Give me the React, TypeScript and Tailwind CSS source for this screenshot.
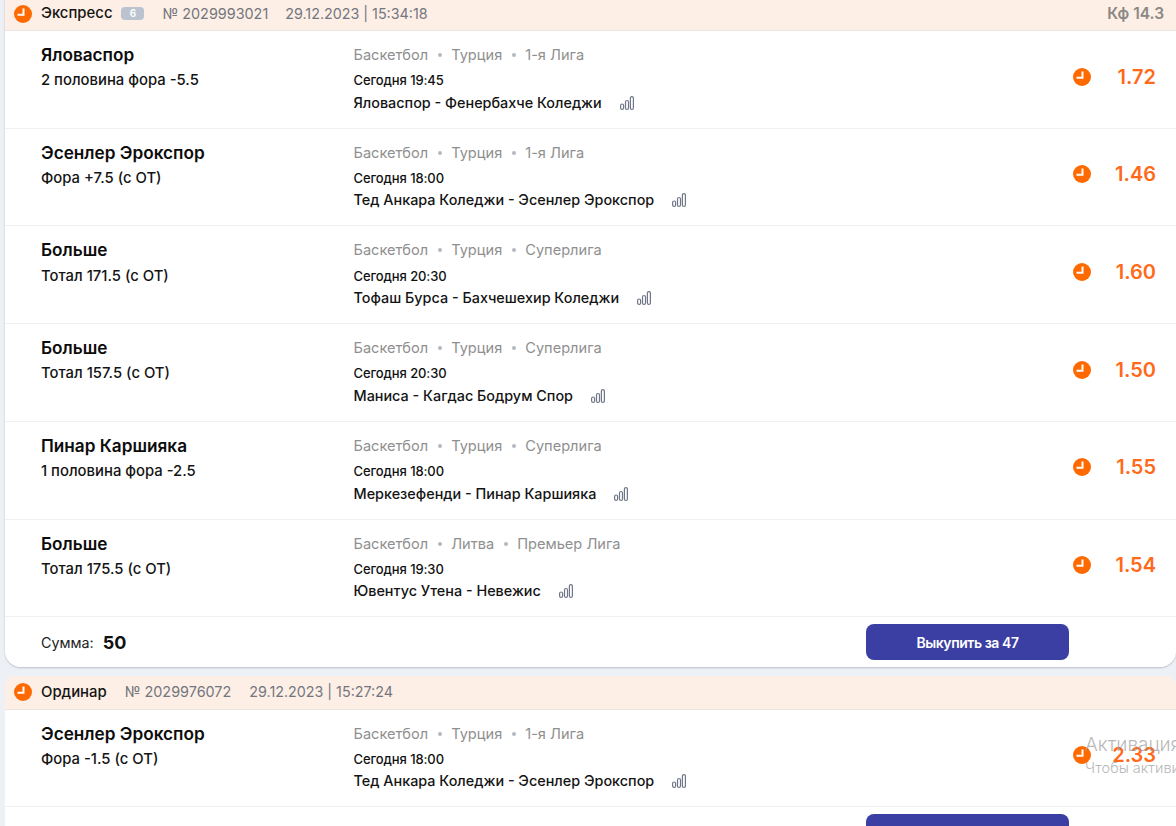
const font = { fontFamily: 'Inter, "Noto Sans", sans-serif' }

const ClockIcon = ({ size = 18 }: { size?: number }) => (
  <svg width={size} height={size} viewBox="0 0 18 18" className="shrink-0">
    <circle cx="9" cy="9" r="9" fill="#ff6a00" />
    <path d="M9.5 3.5v6.2H3.5" fill="none" stroke="#fff" strokeWidth="2" />
  </svg>
)

const StatsIcon = () => (
  <svg width="14" height="14" viewBox="0 0 14 14" className="shrink-0" fill="none" stroke="#6f7688" strokeWidth="1.2">
    <rect x="0.6" y="8" width="3" height="5.4" rx="1.5" />
    <rect x="5.5" y="4.5" width="3" height="8.9" rx="1.5" />
    <rect x="10.4" y="0.6" width="3" height="12.8" rx="1.5" />
  </svg>
)

type Bet = {
  name: string
  market: string
  league: [string, string, string]
  time: string
  match: string
  odd: string
}

const BetRow = ({ bet }: { bet: Bet }) => (
  <div className="flex h-[97.72px] shrink-0 border-b border-[#eef0f4] bg-white">
    <div className="w-[348.5px] shrink-0 pl-[36px] pt-[12px]">
      <div className="text-[17.2px] leading-[24px] font-semibold text-[#0c0c0c]">{bet.name}</div>
      <div className="mt-[1.2px] text-[14.85px] leading-[24px] font-medium text-[#141414]">{bet.market}</div>
    </div>
    <div className="flex-1 pt-[13px]">
      <div className="flex items-center text-[14.6px] leading-[22px] text-[#8f8f8f]">
        <span>{bet.league[0]}</span>
        <span className="mx-[9.5px] h-[4px] w-[4px] rounded-full bg-[#b4b8c0]"></span>
        <span>{bet.league[1]}</span>
        <span className="mx-[9.5px] h-[4px] w-[4px] rounded-full bg-[#b4b8c0]"></span>
        <span>{bet.league[2]}</span>
      </div>
      <div className="mt-[4.2px] text-[13px] leading-[20px] font-medium tracking-[-0.1px] text-[#111]">{bet.time}</div>
      <div className="mt-[0.5px] flex items-center gap-[18px] text-[14.4px] leading-[24px] font-medium text-[#141414]">
        <span>{bet.match}</span>
        <StatsIcon />
      </div>
    </div>
    <div className="flex w-[103px] shrink-0 items-center justify-between pb-[5.8px] pr-[20px]">
      <ClockIcon />
      <span className="text-[20px] font-semibold text-[#ff6a1a]">{bet.odd}</span>
    </div>
  </div>
)

const Footer = ({ amount }: { amount: boolean }) => (
  <div className="flex h-[50px] items-start justify-between bg-white pl-[36px] pr-[107px] pt-[7px]">
    {amount ? (
      <div className="flex h-[36px] items-center">
        <span className="mt-[1px] text-[14.3px] text-[#222]">Сумма:</span>
        <span className="ml-[9px] text-[18px] font-bold text-[#111]">50</span>
      </div>
    ) : (
      <div></div>
    )}
    <button className="h-[36px] w-[203px] rounded-[8px] bg-[#3b3fa3] text-[14px] font-semibold tracking-[-0.45px] text-white">
      Выкупить за 47
    </button>
  </div>
)

const express: Bet[] = [
  { name: 'Яловаспор', market: '2 половина фора -5.5', league: ['Баскетбол', 'Турция', '1-я Лига'], time: 'Сегодня 19:45', match: 'Яловаспор - Фенербахче Коледжи', odd: '1.72' },
  { name: 'Эсенлер Эрокспор', market: 'Фора +7.5 (с ОТ)', league: ['Баскетбол', 'Турция', '1-я Лига'], time: 'Сегодня 18:00', match: 'Тед Анкара Коледжи - Эсенлер Эрокспор', odd: '1.46' },
  { name: 'Больше', market: 'Тотал 171.5 (с ОТ)', league: ['Баскетбол', 'Турция', 'Суперлига'], time: 'Сегодня 20:30', match: 'Тофаш Бурса - Бахчешехир Коледжи', odd: '1.60' },
  { name: 'Больше', market: 'Тотал 157.5 (с ОТ)', league: ['Баскетбол', 'Турция', 'Суперлига'], time: 'Сегодня 20:30', match: 'Маниса - Кагдас Бодрум Спор', odd: '1.50' },
  { name: 'Пинар Каршияка', market: '1 половина фора -2.5', league: ['Баскетбол', 'Турция', 'Суперлига'], time: 'Сегодня 18:00', match: 'Меркезефенди - Пинар Каршияка', odd: '1.55' },
  { name: 'Больше', market: 'Тотал 175.5 (с ОТ)', league: ['Баскетбол', 'Литва', 'Премьер Лига'], time: 'Сегодня 19:30', match: 'Ювентус Утена - Невежис', odd: '1.54' },
]

const single: Bet = { name: 'Эсенлер Эрокспор', market: 'Фора -1.5 (с ОТ)', league: ['Баскетбол', 'Турция', '1-я Лига'], time: 'Сегодня 18:00', match: 'Тед Анкара Коледжи - Эсенлер Эрокспор', odd: '2.33' }

const App = () => {
  return (
    <div className="h-[826px] w-full overflow-hidden bg-[#edf0f5] pl-[5px]" style={font}>
      <div className="-mt-[3px] overflow-hidden rounded-b-[16px] shadow-[0_1px_2px_rgba(120,130,150,0.45)]">
        <div className="flex h-[34.05px] items-center border-b border-[#ece4de] bg-[#fdefe5] pl-[9px] pr-[12px]">
          <ClockIcon />
          <span className="ml-[9px] text-[14.9px] font-medium text-[#141414]">Экспресс</span>
          <span className="ml-[9px] flex h-[13px] w-[23px] items-center justify-center rounded-[4px] bg-[#bcc3d0] text-[10px] font-semibold text-white">6</span>
          <span className="ml-[18px] text-[14.4px] text-[#73767f]">№ 2029993021</span>
          <span className="ml-[17px] text-[14.3px] text-[#73767f]">29.12.2023 | 15:34:18</span>
          <span className="ml-auto text-[15.5px] font-semibold text-[#8a8785]">Кф 14.3</span>
        </div>
        {express.map((bet, i) => (
          <BetRow key={i} bet={bet} />
        ))}
        <Footer amount />
      </div>
      <div className="relative mt-[8.2px] overflow-hidden rounded-t-[10px]">
        <div className="flex h-[34.05px] items-center border-b border-[#ece4de] bg-[#fdefe5] pl-[9px] pr-[20px]">
          <ClockIcon />
          <span className="ml-[9px] text-[14.9px] font-medium text-[#141414]">Ординар</span>
          <span className="ml-[18px] text-[14.4px] text-[#73767f]">№ 2029976072</span>
          <span className="ml-[18px] text-[14.3px] text-[#73767f]">29.12.2023 | 15:27:24</span>
        </div>
        <BetRow bet={single} />
        <Footer amount={false} />
        <div className="absolute left-[1080px] top-[57px] w-[200px] whitespace-nowrap font-light text-[#9a9a9a] opacity-70">
          <div className="text-[19px] leading-[24px]">Активация</div>
          <div className="mt-[3px] text-[14.5px] leading-[16px]">Чтобы активировать</div>
        </div>
      </div>
    </div>
  )
}

export default App
